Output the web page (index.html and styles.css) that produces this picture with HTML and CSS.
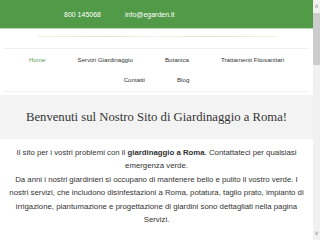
FILE: index.html
```html
<html>
<head>
<title>eGarden - Giardinaggio a Roma</title>
<link rel="stylesheet" href="styles.css">
</head>

<body>

<div class="page">

<div class="topbar">
	<span class="phone">800 145068</span>
	<span class="mail">info@egarden.it</span>
</div>

<div class="logo"><div class="logostrip"></div></div>

<ul class="menu">
	<li class="active">Home</li>
	<li>Servizi Giardinaggio</li>
	<li>Botanica</li>
	<li>Trattamenti Fitosanitari</li>
	<li>Contatti</li>
	<li>Blog</li>
</ul>

<div class="welcome">
	<h1>Benvenuti sul Nostro Sito di Giardinaggio a Roma!</h1>
</div>

<div class="intro">
	<p>Il sito per i vostri problemi con il <b>giardinaggio a Roma</b>. Contattateci per qualsiasi emergenza verde.<br>
	Da anni i nostri giardinieri si occupano di mantenere bello e pulito il vostro verde. I nostri servizi, che includono disinfestazioni a Roma, potatura, taglio prato, impianto di irrigazione, piantumazione e progettazione di giardini sono dettagliati nella pagina Servizi.</p>
</div>

</div>

<!-- fake window scrollbar -->
<div class="scrollbar">
	<div class="sbtn">&#x2c4;</div>
	<div class="thumb"></div>
	<div class="track"></div>
	<div class="sbtn">&#x2c5;</div>
</div>

</body>
</html>
```

FILE: styles.css
```css
html, body {
  height: 100%;
}

body {
  margin: 0;
  display: flex;
  overflow: hidden;
  font-family: "Liberation Sans", Arial, sans-serif;
  color: #333;
}

.page {
  flex: 1;
  overflow: hidden;
}

.scrollbar {
  width: 7px;
  display: flex;
  flex-direction: column;
  background: #f1f1f1;
}
.scrollbar .sbtn {
  height: 13px;
  line-height: 13px;
  text-align: center;
  font-size: 7px;
  color: #888;
}
.scrollbar .thumb {
  height: 52px;
  background: #cdcdcd;
}
.scrollbar .track {
  flex: 1;
}

.topbar {
  background: #519a47;
  border-bottom: 1px solid #b9d8b3;
  height: 28px;
  display: flex;
  align-items: center;
  padding-left: 64px;
  font-size: 7px;
  color: #fff;
}
.topbar .mail {
  margin-left: 24px;
}

.logo {
  padding: 7px 0 11px 38px;
}
.logostrip {
  width: 238px;
  height: 1px;
  background: linear-gradient(90deg, #eef3e0, #dde9c4 30%, #f4f4f0 50%, #dbe8c2 70%, #eef3e0);
}

.menu {
  list-style: none;
  margin: 0 4px;
  padding: 1px 0;
  border-top: 1px solid #f0f0f0;
  border-bottom: 1px solid #f0f0f0;
  display: flex;
  flex-wrap: wrap;
  justify-content: center;
  font-size: 6.2px;
}
.menu li {
  padding: 0 16px;
  line-height: 20px;
}
.menu .active {
  color: #5aa04f;
}

.welcome {
  margin-top: 3px;
  background: #f3f3f3;
  height: 44px;
  display: flex;
  align-items: center;
  justify-content: center;
}
.welcome h1 {
  margin: 0;
  font-family: "Liberation Serif", "Times New Roman", serif;
  font-weight: normal;
  font-size: 12.7px;
  color: #333;
}

.intro {
  padding: 7px 7px 0;
  text-align: center;
  font-size: 7.8px;
  line-height: 13.4px;
}
.intro p {
  margin: 0;
}
```
